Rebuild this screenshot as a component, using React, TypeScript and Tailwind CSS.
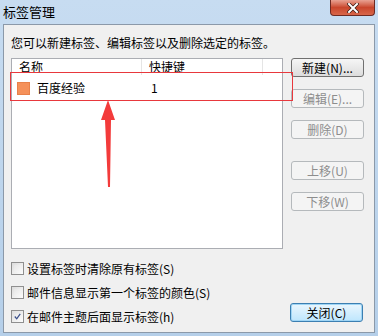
import React from "react";

const font = { fontFamily: '"Noto Sans CJK SC", "Liberation Sans", sans-serif' };

const Btn: React.FC<{ label: string; disabled?: boolean; focused?: boolean; className?: string }> = ({
    label,
    disabled,
    focused,
    className = "",
}) => {
    if (disabled) {
        return (
            <div
                className={`h-[19px] w-[73px] rounded-[3px] border border-[#b5b9bc] bg-[#f4f4f4] text-[#8d8d8d] text-[12px] leading-[17px] text-center ${className}`}
            >
                {label}
            </div>
        );
    }
    if (focused) {
        return (
            <div
                className={`h-[19px] w-[73px] rounded-[3px] border border-[#3c7fb1] bg-gradient-to-b from-[#eaf6fd] to-[#bee6fd] text-black text-[12px] leading-[17px] text-center shadow-[inset_0_0_0_1px_#9fd5f5] ${className}`}
            >
                {label}
            </div>
        );
    }
    return (
        <div
            className={`h-[19px] w-[73px] rounded-[3px] border border-[#707070] bg-gradient-to-b from-[#f6f6f6] to-[#dcdcdc] text-black text-[12px] leading-[17px] text-center ${className}`}
        >
            {label}
        </div>
    );
};

const Check: React.FC<{ label: string; checked?: boolean }> = ({ label, checked }) => (
    <div className="flex items-center gap-[3px] h-[13px]">
        <div className="w-[13px] h-[13px] border border-[#8f8f8f] bg-gradient-to-br from-[#dcdcdc] to-[#fdfdfd] p-[2px]">
            <div className="w-full h-full bg-gradient-to-br from-[#e6e6e6] to-[#f8f8f8] flex items-center justify-center">
                {checked && (
                    <svg width="9" height="9" viewBox="0 0 9 9">
                        <path d="M1 4.5 L3.5 7.5 L8 1" fill="none" stroke="#3a4f8a" strokeWidth="1.6" />
                    </svg>
                )}
            </div>
        </div>
        <span className="text-[12px] leading-[14px] text-black">{label}</span>
    </div>
);

const App: React.FC = () => {
    return (
        <div
            className="relative w-[378px] h-[336px] bg-gradient-to-b from-[#c7dcf1] to-[#b5cfe9] overflow-hidden"
            style={font}
        >
            {/* title bar */}
            <div className="h-[24px] flex items-start justify-between">
                <span className="ml-[3px] mt-[4px] text-[13px] leading-[16px] text-black">标签管理</span>
                <div className="mr-[3px] w-[45px] h-[16px] rounded-b-[4px] border border-[#6e2a22] border-t-0 bg-gradient-to-b from-[#e8a192] via-[#c9462c] to-[#d8664a] flex items-center justify-center">
                    <svg width="12" height="10" viewBox="0 0 12 10">
                        <path d="M2 1 L10 9 M10 1 L2 9" stroke="#3b1b15" strokeWidth="3.4" strokeLinecap="square" />
                        <path d="M2 1 L10 9 M10 1 L2 9" stroke="#ffffff" strokeWidth="2" strokeLinecap="square" />
                    </svg>
                </div>
            </div>

            {/* panel */}
            <div className="ml-[3px] w-[372px] h-[309px] border border-[#8b99a9] bg-[#f0f0f0] pl-[7px] pt-[10px]">
                <div className="text-[12px] leading-[16px] text-black">您可以新建标签、编辑标签以及删除选定的标签。</div>

                <div className="flex mt-[7px]">
                    {/* list */}
                    <div className="w-[272px] h-[191px] border border-[#abadb3] bg-white">
                        <div className="flex h-[16px] text-[12px] leading-[15px] text-black">
                            <div className="w-[130px] pl-[7px] border-r border-[#e5e5e5]">名称</div>
                            <div className="w-[121px] pl-[7px] border-r border-[#e5e5e5]">快捷键</div>
                        </div>
                        <div className="flex items-center h-[18px] mt-[4px] text-[12px] text-black">
                            <div className="w-[130px] flex items-center pl-[5px]">
                                <div className="w-[13px] h-[13px] bg-[#f5915a] border border-[#e8814a]" />
                                <span className="ml-[7px]">百度经验</span>
                            </div>
                            <div className="pl-[9px]">1</div>
                        </div>
                    </div>

                    {/* buttons */}
                    <div className="ml-[8px] flex flex-col">
                        <Btn label="新建(N)..." />
                        <Btn label="编辑(E)..." disabled className="mt-[12px]" />
                        <Btn label="删除(D)" disabled className="mt-[12px]" />
                        <Btn label="上移(U)" disabled className="mt-[22px]" />
                        <Btn label="下移(W)" disabled className="mt-[12px]" />
                    </div>
                </div>

                <div className="flex items-end mt-[13px]">
                    <div className="flex flex-col gap-[11px]">
                        <Check label="设置标签时清除原有标签(S)" />
                        <Check label="邮件信息显示第一个标签的颜色(S)" />
                        <Check label="在邮件主题后面显示标签(h)" checked />
                    </div>
                    <Btn label="关闭(C)" focused className="ml-auto mr-[11px] mb-[1px]" />
                </div>
            </div>

            {/* red annotation box */}
            <div className="absolute left-[10px] top-[72px] w-[283px] h-[29px] border border-[#e8383d]" />
            {/* red arrow */}
            <svg className="absolute left-[98px] top-[100px]" width="22" height="90" viewBox="0 0 22 90">
                <path d="M10 0 L17 20 L13 20 L12 87 L10 87 L7 20 L3 20 Z" fill="#f33b3b" />
            </svg>
        </div>
    );
};

export default App;
